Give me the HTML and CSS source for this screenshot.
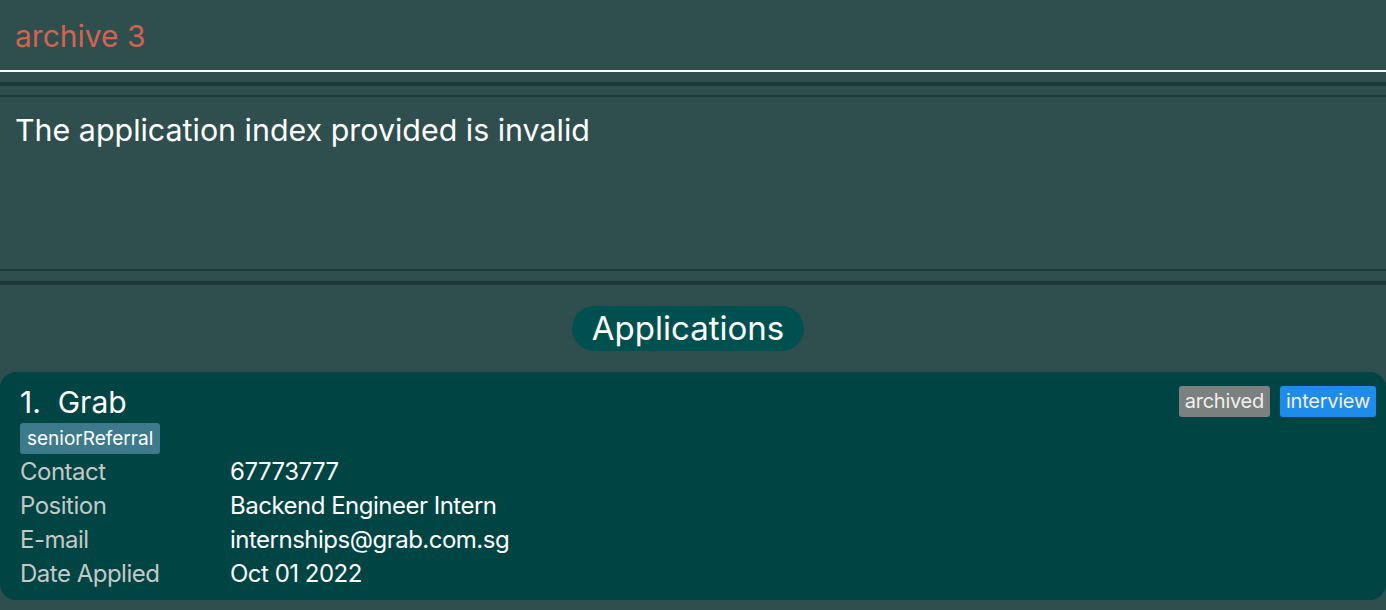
FILE: index.html
```html
<!DOCTYPE html>
<html>
<head>
<meta charset="utf-8">
<link rel="stylesheet" href="styles.css">
</head>
<body>
<div class="command">archive 3</div>
<div class="sep-thick top-gap"></div>
<div class="sep-thin"></div>
<div class="result">The application index provided is invalid</div>
<div class="sep-thin"></div>
<div class="sep-thick"></div>
<div class="list">
  <div class="list-title-row"><span class="list-title">Applications</span></div>
  <div class="card">
    <div class="card-head">
      <div class="card-main">
        <div class="card-name">1.&nbsp;&nbsp;Grab</div>
        <div class="tags"><span class="tag tag-ref">seniorReferral</span></div>
      </div>
      <div class="status">
        <span class="badge badge-archived">archived</span>
        <span class="badge badge-interview">interview</span>
      </div>
    </div>
    <div class="fields">
      <div class="label">Contact</div><div class="value">67773777</div>
      <div class="label">Position</div><div class="value">Backend Engineer Intern</div>
      <div class="label">E-mail</div><div class="value">internships@grab.com.sg</div>
      <div class="label">Date Applied</div><div class="value">Oct 01 2022</div>
    </div>
  </div>
</div>
</body>
</html>
```
FILE: styles.css
```css
html, body {
  margin: 0;
  padding: 0;
}
body {
  background: #2f4f4f;
  font-family: Inter, "Noto Sans", sans-serif;
  width: 1386px;
  height: 610px;
  overflow: hidden;
}
.command {
  box-sizing: border-box;
  border-bottom: 2px solid #ffffff;
  height: 72px;
  padding: 16px 0 0 15px;
  font-size: 30px;
  line-height: 40px;
  color: #d2634f;
}
.sep-thick {
  height: 4px;
  background: #1e3838;
}
.top-gap {
  margin-top: 10px;
}
.sep-thin {
  height: 2px;
  background: #1e3838;
  margin-top: 9px;
}
.result {
  height: 172px;
  box-sizing: border-box;
  padding: 13px 0 0 15px;
  font-size: 30.4px;
  line-height: 40px;
  color: #ffffff;
}
.result + .sep-thin {
  margin-top: 0;
}
.result + .sep-thin + .sep-thick {
  margin-top: 10px;
}
.list {
  padding-top: 21px;
}
.list-title-row {
  display: flex;
  justify-content: center;
}
.list-title {
  background: #005050;
  color: #ffffff;
  font-size: 33px;
  line-height: 45px;
  height: 45px;
  padding: 0 20px;
  border-radius: 23px;
  margin-right: 10px;
}
.card {
  margin-top: 21px;
  background: #004444;
  border-radius: 16px;
  height: 228px;
  box-sizing: border-box;
  padding: 12px 10px 0 20px;
}
.card-head {
  display: flex;
  justify-content: space-between;
  align-items: flex-start;
}
.card-name {
  font-size: 30px;
  line-height: 36px;
  color: #ffffff;
}
.tags {
  margin-top: 3px;
  display: flex;
}
.tag {
  font-size: 19px;
  line-height: 31px;
  height: 31px;
  padding: 0 7px;
  border-radius: 3px;
  color: #ffffff;
}
.tag-ref {
  background: #3d7a8c;
}
.status {
  display: flex;
  gap: 10px;
  margin-top: 2px;
}
.badge {
  font-size: 20px;
  line-height: 31px;
  height: 31px;
  padding: 0 6px;
  border-radius: 3px;
  color: #f0f0f0;
  letter-spacing: -0.25px;
}
.badge-archived {
  background: #7b817e;
}
.badge-interview {
  background: #1e8ce8;
}
.fields {
  display: grid;
  grid-template-columns: 210px auto;
  grid-auto-rows: 34px;
  margin-top: 1px;
  font-size: 24px;
  line-height: 34px;
  letter-spacing: -0.5px;
}
.label {
  color: #c4c8c6;
}
.value {
  color: #ffffff;
}
```
